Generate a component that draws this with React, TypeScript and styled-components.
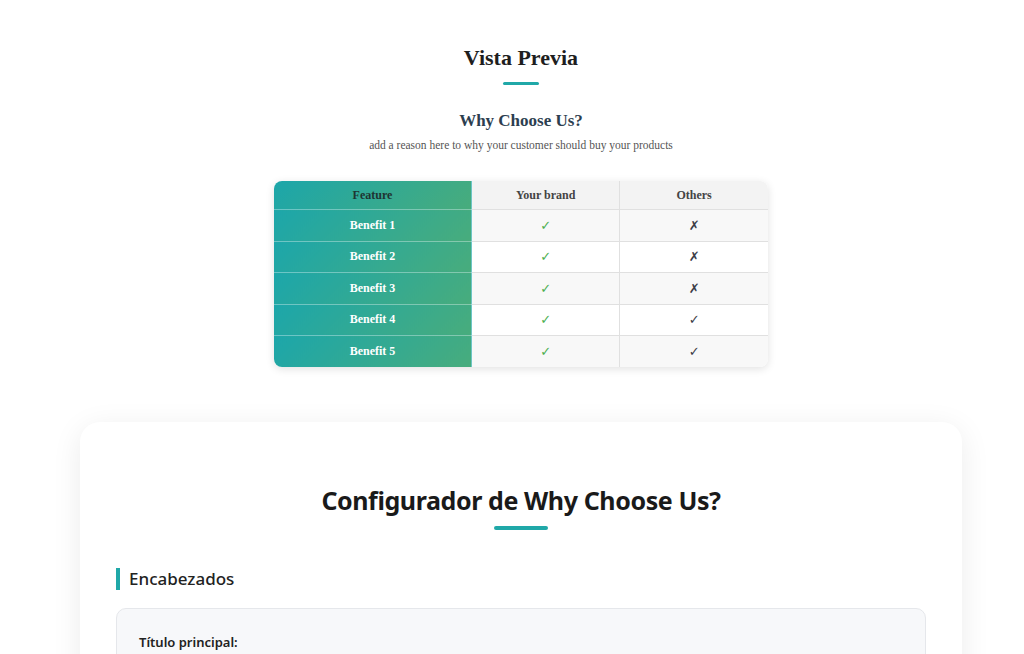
import React from 'react';
import styled, { createGlobalStyle, css } from 'styled-components';

const GlobalStyle = createGlobalStyle`
    html, body {
        margin: 0;
        padding: 0;
        background-color: rgb(255, 255, 255);
    }
`;

const Page = styled('div')`
    padding: 0 2px 40px 20px;
    font-family: 'Liberation Serif', 'Times New Roman', serif;
`;

const Preview = styled('section')`
    display: flex;
    flex-direction: column;
    align-items: center;
    padding-top: 44px;
`;

const PreviewTitle = styled('h2')`
    margin: 0;
    font-size: 22px;
    line-height: 28px;
    font-weight: 700;
    color: rgb(30, 30, 30);
`;

const Underline = styled('div')<{ $width: number; $height: number }>`
    width: ${(p) => p.$width}px;
    height: ${(p) => p.$height}px;
    border-radius: 2px;
    background-color: rgb(32, 168, 168);
`;

const SectionTitle = styled('h3')`
    margin: 25px 0 0;
    font-size: 17px;
    line-height: 22px;
    font-weight: 700;
    color: rgb(44, 62, 80);
`;

const SectionText = styled('p')`
    margin: 5px 0 0;
    font-size: 11.5px;
    line-height: 16px;
    color: rgb(85, 85, 85);
`;

const TableWrap = styled('div')`
    margin-top: 28px;
    width: 494px;
    border-radius: 8px;
    overflow: hidden;
    box-shadow: 0 2px 8px rgba(0, 0, 0, 0.12);
`;

const Table = styled('table')`
    width: 100%;
    border-collapse: collapse;
    table-layout: fixed;
    font-size: 12px;
    text-align: center;
`;

const cell = css`
    border: solid 1px rgb(224, 224, 224);
    padding: 0;
    font-weight: 700;
`;

const FeatureCell = styled('td')<{ $head?: boolean }>`
    ${cell}
    width: 197px;
    height: ${(p) => (p.$head ? 28 : 30.5)}px;
    background: linear-gradient(135deg, rgb(28, 166, 170) 0%, rgb(72, 172, 124) 100%);
    color: ${(p) => (p.$head ? 'rgb(30, 52, 50)' : 'rgb(255, 255, 255)')};
    border-color: rgba(255, 255, 255, 0.35);
    border-left: none;
`;

const HeadCell = styled('th')`
    ${cell}
    height: 28px;
    background-color: rgb(243, 243, 243);
    color: rgb(68, 68, 68);
    border-top: none;
`;

const MarkCell = styled('td')<{ $brand?: boolean }>`
    ${cell}
    font-weight: 400;
    font-size: 13px;
    font-family: 'DejaVu Sans', sans-serif;
    color: ${(p) => (p.$brand ? 'rgb(76, 175, 80)' : 'rgb(60, 60, 70)')};
`;

const Row = styled('tr')<{ $odd: boolean }>`
    background-color: ${(p) => (p.$odd ? 'rgb(248, 248, 248)' : 'rgb(255, 255, 255)')};

    > td:last-child,
    > th:last-child {
        border-right: none;
    }

    &:last-child > td {
        border-bottom: none;
    }
`;

const Card = styled('section')`
    margin: 55px auto 0;
    width: 882px;
    box-sizing: border-box;
    padding: 60px 36px 40px;
    background-color: rgb(255, 255, 255);
    border-radius: 20px;
    box-shadow: 0 6px 30px rgba(0, 0, 0, 0.08);
    font-family: 'Noto Sans', 'Open Sans', sans-serif;
`;

const CardHeader = styled('div')`
    display: flex;
    flex-direction: column;
    align-items: center;
    gap: 8px;
`;

const CardTitle = styled('h1')`
    margin: 0;
    font-size: 25px;
    line-height: 36px;
    font-weight: 700;
    letter-spacing: -0.4px;
    color: rgb(26, 26, 26);
`;

const GroupTitle = styled('h4')`
    margin: 38px 0 0;
    padding-left: 9px;
    border-left: solid 4px rgb(32, 168, 168);
    font-size: 17px;
    line-height: 22px;
    font-weight: 500;
    color: rgb(34, 34, 34);
`;

const FieldBox = styled('div')`
    margin-top: 18px;
    padding: 24px 22px 40px;
    background-color: rgb(247, 248, 250);
    border: solid 1px rgb(229, 231, 235);
    border-radius: 10px;
`;

const FieldLabel = styled('label')`
    display: block;
    font-size: 13px;
    line-height: 18px;
    font-weight: 600;
    color: rgb(34, 34, 34);
`;

const rows = [
    { name: 'Benefit 1', brand: true, others: false },
    { name: 'Benefit 2', brand: true, others: false },
    { name: 'Benefit 3', brand: true, others: false },
    { name: 'Benefit 4', brand: true, others: true },
    { name: 'Benefit 5', brand: true, others: true }
];

export default function App() {
    return (
        <Page>
            <GlobalStyle />
            <Preview>
                <PreviewTitle>Vista Previa</PreviewTitle>
                <Underline $width={36} $height={3} style={{ marginTop: 10 }} />
                <SectionTitle>Why Choose Us?</SectionTitle>
                <SectionText>add a reason here to why your customer should buy your products</SectionText>
                <TableWrap>
                    <Table>
                        <thead>
                            <Row $odd={false}>
                                <FeatureCell as="th" $head style={{ borderTop: 'none' }}>
                                    Feature
                                </FeatureCell>
                                <HeadCell>Your brand</HeadCell>
                                <HeadCell>Others</HeadCell>
                            </Row>
                        </thead>
                        <tbody>
                            {rows.map((row, i) => (
                                <Row key={row.name} $odd={i % 2 === 0}>
                                    <FeatureCell>{row.name}</FeatureCell>
                                    <MarkCell $brand>{row.brand ? '✓' : '✗'}</MarkCell>
                                    <MarkCell>{row.others ? '✓' : '✗'}</MarkCell>
                                </Row>
                            ))}
                        </tbody>
                    </Table>
                </TableWrap>
            </Preview>
            <Card>
                <CardHeader>
                    <CardTitle>Configurador de Why Choose Us?</CardTitle>
                    <Underline $width={54} $height={4} />
                </CardHeader>
                <GroupTitle>Encabezados</GroupTitle>
                <FieldBox>
                    <FieldLabel>Título principal:</FieldLabel>
                </FieldBox>
            </Card>
        </Page>
    );
}
